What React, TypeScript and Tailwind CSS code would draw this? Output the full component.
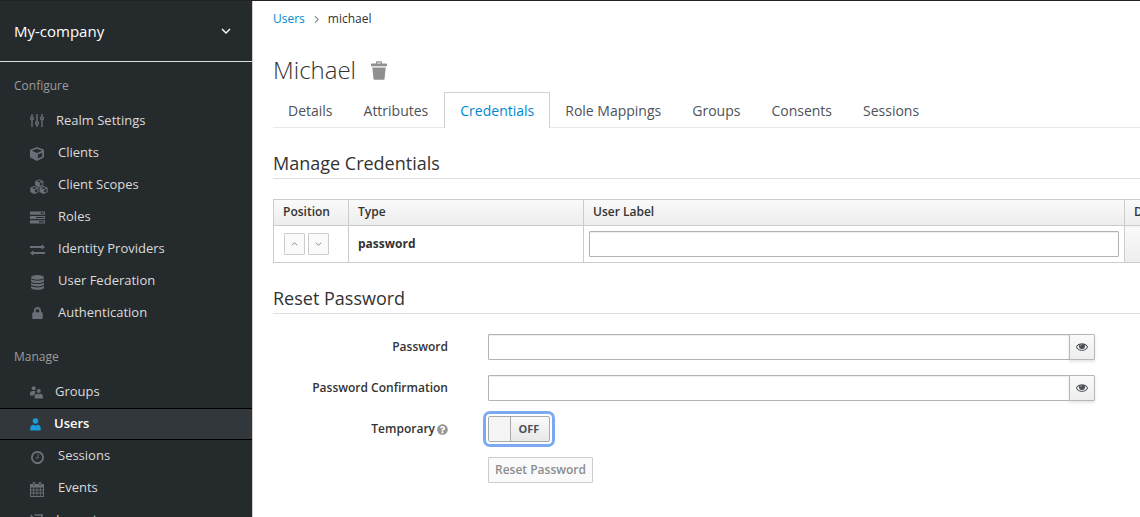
import { useState, type ReactNode } from "react";
import { FaCube, FaLock, FaQuestionCircle } from "react-icons/fa";

function SlidersIcon() {
  return (
    <svg viewBox="0 0 14 14" className="size-[14px]" fill="none" stroke="currentColor" strokeWidth="1.4" aria-hidden="true">
      <path d="M2 0V2.5M2 6V13M7 0V7.500M7 11V13M12 0V2.500M12 6V13" />
      <circle cx="2" cy="4.300" r="1.400" />
      <circle cx="7" cy="9.200" r="1.400" />
      <circle cx="12" cy="4.300" r="1.400" />
    </svg>
  );
}

const smallCubes = [
  { x: 5.5, y: 0.3 },
  { x: 0.5, y: 7.1 },
  { x: 10, y: 7.1 },
];

function CubesIcon() {
  return (
    <svg viewBox="0 0 18.500 15.500" className="h-[15px] w-[18px]" aria-hidden="true">
      {smallCubes.map((cube) => (
        <g key={cube.x} transform={`translate(${cube.x} ${cube.y})`}>
          <path fill="none" stroke="currentColor" strokeWidth="1.100" strokeLinejoin="round" d="M4 0.600L7.700 2.200V6L4 7.800L0.300 6V2.200zM0.300 2.200L4 3.900L7.700 2.200M4 3.900V7.800" />
          <path fill="currentColor" d="M0.300 2.200L4 3.900V7.800L0.300 6z" />
        </g>
      ))}
    </svg>
  );
}

function DatabaseIcon() {
  return (
    <svg viewBox="0 0 15 15" className="size-[15px]" fill="currentColor" aria-hidden="true">
      <ellipse cx="7.500" cy="2.400" rx="6.500" ry="2.400" />
      <path d="M1 4c1.300 1.100 3.700 1.700 6.500 1.700S12.700 5.100 14 4v1.700c0 1.300-2.900 2.400-6.500 2.400S1 7 1 5.700zM1 7.400c1.300 1.100 3.700 1.700 6.500 1.700s5.200-.6 6.500-1.700v1.700c0 1.300-2.900 2.400-6.500 2.400S1 10.400 1 9.100zM1 10.800c1.300 1.100 3.700 1.700 6.500 1.700s5.200-.6 6.500-1.700v1.700c0 1.300-2.900 2.400-6.500 2.400S1 13.800 1 12.500z" />
    </svg>
  );
}

function TasksIcon() {
  return (
    <svg viewBox="0 0 15 13" className="h-[13px] w-[15px]" fill="currentColor" aria-hidden="true">
      <path fillRule="evenodd" d="M0 0.5h15v3.2H0zM10.5 1.5v1.2h3.4V1.5zM0 4.9h15v3.2H0zM6 5.9v1.2h7.9V5.9zM0 9.3h15v3.2H0zM9 10.3v1.2h4.9v-1.2z" />
    </svg>
  );
}

function ExchangeIcon() {
  return (
    <svg viewBox="0 0 15 12" className="h-[12px] w-[15px]" fill="currentColor" aria-hidden="true">
      <path d="M0 2.1h11.600V0.300L15 3l-3.400 2.800V4.100H0zM15 8.100H3.400V6.200L0 9l3.400 2.800V10.100H15z" />
    </svg>
  );
}

function GroupsIcon() {
  return (
    <svg viewBox="0 0 13 13" className="size-[13px]" fill="currentColor" aria-hidden="true">
      <circle cx="3.7" cy="2.3" r="2" />
      <circle cx="8.8" cy="4.9" r="2" />
      <path d="M0 9.4V7.6C0 5.9 1.2 5 2.6 5h1.8c.7 0 1.300.2 1.700.6C5 6.400 4.900 7.300 5.300 8.100 4.600 8.400 4 8.900 3.700 9.400zM4.600 12.500v-1.900c0-1.700 1.300-2.900 2.800-2.900.8.6 2 .6 2.800 0 1.500 0 2.800 1.200 2.800 2.900v1.900z" />
    </svg>
  );
}

function UserIcon() {
  return (
    <svg viewBox="0 0 11 13" className="h-[13px] w-[11px]" fill="currentColor" aria-hidden="true">
      <circle cx="5.500" cy="3" r="2.800" />
      <path d="M0.300 12.500V10c0-2 1.300-3.300 3-3.300 1.300.9 3.100.9 4.400 0 1.700 0 3 1.300 3 3.300v2.500z" />
    </svg>
  );
}

function ClockIcon() {
  return (
    <svg viewBox="128 128 1536 1536" className="size-[13px]" fill="currentColor" aria-hidden="true">
      <path d="M1024 544v448q0 14-9 23t-23 9h-320q-14 0-23-9t-9-23v-64q0-14 9-23t23-9h224v-352q0-14 9-23t23-9h64q14 0 23 9t9 23zm416 352q0-148-73-273t-198-198-273-73-273 73-198 198-73 273 73 273 198 198 273 73 273-73 198-198 73-273zm224 0q0 209-103 385.500t-279.500 279.500-385.500 103-385.500-103-279.500-279.500-103-385.500 103-385.500 279.500-279.500 385.500-103 385.500 103 279.500 279.500 103 385.500z" />
    </svg>
  );
}

function CalendarIcon() {
  return (
    <svg viewBox="0 0 14 15" className="h-[15px] w-[14px]" aria-hidden="true">
      <path fill="currentColor" fillRule="evenodd" d="M1 2h1.600V1.200C2.600.5 3 0 3.700 0h.6c.7 0 1.100.5 1.100 1.200V2h3.200v-.8C8.600.5 9 0 9.700 0h.6c.7 0 1.100.5 1.100 1.200V2H13c.6 0 1 .4 1 1v11c0 .6-.4 1-1 1H1c-.6 0-1-.4-1-1V3c0-.6.4-1 1-1zM1 5.500v2h2.300v-2zM4.100 5.500v2h2.500v-2zM7.400 5.500v2h2.500v-2zM10.700 5.500v2H13v-2zM1 8.500v2h2.300v-2zM4.100 8.500v2h2.500v-2zM7.400 8.500v2h2.500v-2zM10.700 8.500v2H13v-2zM1 11.500V14h2.300v-2.500zM4.100 11.500V14h2.500v-2.500zM7.400 11.500V14h2.500v-2.500zM10.700 11.500V14H13v-2.500zM3.600 1v2.500h.8V1zM9.600 1v2.500h.8V1z" />
    </svg>
  );
}

function ImportIcon() {
  return (
    <svg viewBox="0 0 13 13" className="size-[13px]" fill="none" stroke="currentColor" strokeWidth="1.700" aria-hidden="true">
      <path d="M4.500 1H12v11H4.500M0.600 1.200L7.500 8M8 3.500V8.500H3" />
    </svg>
  );
}

function EyeIcon() {
  return (
    <svg viewBox="0 384 1792 1152" className="h-[8px] w-[12px]" fill="currentColor" aria-hidden="true">
      <path d="M1664 960q-152-236-381-353 61 104 61 225 0 185-131.500 316.500t-316.500 131.500-316.500-131.500-131.500-316.500q0-121 61-225-229 117-381 353 133 205 333.500 326.500t434.500 121.500 434.500-121.500 333.500-326.500zm-720-384q0-20-14-34t-34-14q-125 0-214.500 89.500t-89.500 214.500q0 20 14 34t34 14 34-14 14-34q0-86 61-147t147-61q20 0 34-14t14-34zm848 384q0 34-20 69-140 230-376.500 368.500t-499.500 138.500-499.500-139-376.500-368q-20-35-20-69t20-69q140-229 376.500-368t499.500-139 499.500 139 376.500 368q20 35 20 69z" />
      <circle cx="896" cy="832" r="330" fillOpacity="0.6" />
    </svg>
  );
}

function TrashIcon() {
  return (
    <svg viewBox="0 0 16 19" className="h-[19px] w-[16px]" fill="currentColor" aria-hidden="true">
      <path fillRule="evenodd" d="M0 3.200c0-.5.300-.8.800-.8H5V1.300C5 .6 5.500.2 6.100.2h3.800c.6 0 1.100.4 1.100 1.100v1.100h4.200c.5 0 .8.300.8.800v2H0zM6.300 1.500v.9h3.400v-.9zM1.300 6.400h13.400l-1.200 11.700c-.1.500-.4.700-.8.700H3.300c-.4 0-.7-.2-.8-.7z" />
    </svg>
  );
}

function Chevron({ className, d, width }: { className: string; d: string; width: string }) {
  return (
    <svg viewBox="0 0 10 6" className={className} fill="none" stroke="currentColor" strokeWidth={width} aria-hidden="true">
      <path d={d} />
    </svg>
  );
}

const DOWN = "M1 1L5 5L9 1";
const UP = "M1 5L5 1L9 5";

type Item = { label: string; icon: ReactNode; gap: string; active?: boolean };

const configure: Item[] = [
  { label: "Realm Settings", icon: <SlidersIcon />, gap: "w-[26px]" },
  { label: "Clients", icon: <FaCube className="size-[14px]" />, gap: "w-7 pt-[2px]" },
  { label: "Client Scopes", icon: <CubesIcon />, gap: "w-7 pt-[2px]" },
  { label: "Roles", icon: <TasksIcon />, gap: "w-7" },
  { label: "Identity Providers", icon: <ExchangeIcon />, gap: "w-7 pt-[2px]" },
  { label: "User Federation", icon: <DatabaseIcon />, gap: "w-7 pt-[2px]" },
  { label: "Authentication", icon: <FaLock className="h-[12px] w-[15px]" />, gap: "w-7" },
];

const manage: Item[] = [
  { label: "Groups", icon: <GroupsIcon />, gap: "w-[25px]" },
  { label: "Users", icon: <UserIcon />, gap: "w-6", active: true },
  { label: "Sessions", icon: <ClockIcon />, gap: "w-7 pl-px pt-[2px]" },
  { label: "Events", icon: <CalendarIcon />, gap: "w-7 pt-[2px]" },
  { label: "Import", icon: <ImportIcon />, gap: "w-[26px]" },
];

function NavSection({ title, items }: { title: string; items: Item[] }) {
  return (
    <section>
      <h2 className="px-[14px] text-xs leading-4 text-[#9c9c9c]">{title}</h2>
      <ul className="mt-[11px]">
        {items.map((item) => (
          <li key={item.label}>
            <a
              href={"#" + item.label.toLowerCase().replace(" ", "-")}
              className={
                item.active
                  ? "flex h-8 items-center border-y border-black bg-[#32373b] pl-[30px] text-[13px] font-semibold text-white"
                  : "flex h-8 items-center pl-[30px] text-[13px] text-[#dbdbdb]"
              }
            >
              <span className={(item.active ? "text-[#1b9cd8] " : "text-[#6a6e76] ") + "shrink-0 " + item.gap}>{item.icon}</span>
              {item.label}
            </a>
          </li>
        ))}
      </ul>
    </section>
  );
}

const tabs = ["Details", "Attributes", "Credentials", "Role Mappings", "Groups", "Consents", "Sessions"];

function SectionTitle({ children }: { children: ReactNode }) {
  return <h2 className="border-b border-[#ddd] pb-[3px] text-lg leading-6 text-[#333]">{children}</h2>;
}

const inputStyle = "h-[26px] w-full min-w-0 rounded-[1px] border border-[#b3b3b3] bg-white px-2 text-xs shadow-[inset_0_1px_1px_rgba(0,0,0,0.075)] outline-none";

function PasswordRow({ id, label }: { id: string; label: string }) {
  const [visible, setVisible] = useState(false);
  return (
    <div className="flex items-center">
      <label htmlFor={id} className="w-[175px] shrink-0 text-right text-xs font-semibold text-[#333]">
        {label}
      </label>
      <div className="ml-10 mr-[45px] flex flex-1">
        <input id={id} type={visible ? "text" : "password"} className={inputStyle} />
        <button
          type="button"
          aria-label={"Show " + label.toLowerCase()}
          onClick={() => setVisible(!visible)}
          className="-ml-px flex h-[26px] w-[26px] shrink-0 items-center justify-center rounded-r-[1px] border border-[#b7b7b7] bg-linear-to-b from-[#fafafa] to-[#ededed] text-[#4d5258] shadow-[0_2px_3px_rgba(3,3,3,0.1)]"
        >
          <EyeIcon />
        </button>
      </div>
    </div>
  );
}

const headCell = "border border-[#ccc] px-[9px] pb-px text-left font-semibold";
const moveButton = "flex h-[22px] w-[21px] items-center justify-center rounded-[1px] border border-[#ccc] bg-[#fafafa] text-[#8b8d8f]";

export default function App() {
  const [temporary, setTemporary] = useState(false);
  return (
    <div className="flex h-screen overflow-hidden border-t border-[#222] bg-white font-['Open_Sans',sans-serif] text-xs text-[#333]">
      <nav className="w-[253px] shrink-0 overflow-hidden border-r border-[#d1d1d1] bg-[#252a2d]">
        <button type="button" className="flex h-[61px] w-full items-center justify-between border-b border-[#d8dde0] pb-px pl-[14px] pr-[21px] text-[15px] text-white">
          My-company
          <Chevron className="h-[6px] w-[10px]" d={DOWN} width="1.4" />
        </button>
        <div className="flex flex-col gap-5 pt-4">
          <NavSection title="Configure" items={configure} />
          <NavSection title="Manage" items={manage} />
        </div>
      </nav>

      <main className="min-w-0 flex-1 overflow-hidden pl-5">
        <nav aria-label="Breadcrumb" className="flex h-9 items-center">
          <a href="#users" className="text-[#0088ce]">Users</a>
          <Chevron className="mx-[7px] h-[5px] w-[9px] -rotate-90 text-[#8b8d8f]" d={DOWN} width="1.4" />
          <span>michael</span>
        </nav>

        <div className="mt-[15px] flex h-9 items-center gap-[15px]">
          <h1 className="text-2xl font-light">Michael</h1>
          <button type="button" aria-label="Delete user" className="pt-px text-[#8f8f8f]">
            <TrashIcon />
          </button>
        </div>

        <ul className="mt-1 flex border-b border-[#e9e9e9] text-sm leading-[22px] text-[#4d5258]">
          {tabs.map((tab) => (
            <li key={tab} className="-mb-px">
              <a
                href={"#" + tab.toLowerCase().replace(" ", "-")}
                className={
                  tab === "Credentials"
                    ? "block border border-b-0 border-[#d1d1d1] bg-white px-[15px] pb-[6px] pt-[7px] text-[#0088ce]"
                    : "block border-r border-t border-transparent px-[15px] pb-[6px] pt-[7px]"
                }
              >
                {tab}
              </a>
            </li>
          ))}
        </ul>

        <div className="pt-[23px]">
          <SectionTitle>Manage Credentials</SectionTitle>
        </div>

        <table className="mt-5 w-[calc(100%+185px)] table-fixed border-collapse">
          <colgroup>
            <col className="w-[75px]" />
            <col className="w-[235px]" />
            <col />
            <col className="w-[200px]" />
          </colgroup>
          <thead>
            <tr className="h-[26px] bg-linear-to-b from-[#fafafa] to-[#ededed]">
              <th scope="col" className={headCell}>Position</th>
              <th scope="col" className={headCell}>Type</th>
              <th scope="col" className={headCell}>User Label</th>
              <th scope="col" className={headCell}>Data</th>
            </tr>
          </thead>
          <tbody>
            <tr className="h-[37px]">
              <td className="border border-[#ccc] px-[10px]">
                <div className="flex gap-[3px]">
                  <button type="button" aria-label="Move up" className={moveButton}>
                    <Chevron className="h-[4px] w-[7px]" d={UP} width="1.500" />
                  </button>
                  <button type="button" aria-label="Move down" className={moveButton}>
                    <Chevron className="h-[4px] w-[7px]" d={DOWN} width="1.500" />
                  </button>
                </div>
              </td>
              <td className="border border-[#ccc] px-[9px] font-bold">password</td>
              <td className="border border-[#ccc] px-[5px]">
                <input aria-label="User Label" type="text" className={inputStyle + " block"} />
              </td>
              <td className="border border-[#ccc] bg-linear-to-b from-[#fafafa] to-[#ededed]" />
            </tr>
          </tbody>
        </table>

        <div className="pt-[23px]">
          <SectionTitle>Reset Password</SectionTitle>
        </div>

        <form className="mt-5 flex flex-col gap-[15px]" onSubmit={(event) => event.preventDefault()}>
          <PasswordRow id="password" label="Password" />
          <PasswordRow id="password-confirmation" label="Password Confirmation" />
          <div className="flex items-center">
            <label htmlFor="temporary" className="flex w-[175px] shrink-0 items-center justify-end gap-[2px] font-semibold">
              Temporary
              <FaQuestionCircle className="size-[11px] text-[#999]" />
            </label>
            <label className="relative ml-10 flex h-[26px] w-[62px] cursor-pointer rounded-[2px] border border-[#aaa] bg-linear-to-b from-[#fafafa] to-[#e8e8e8] font-semibold text-[#4d5258] outline-3 outline-offset-2 outline-[#7baaf0]">
              <input
                id="temporary"
                type="checkbox"
                checked={temporary}
                onChange={(event) => setTemporary(event.target.checked)}
                className="peer absolute inset-0 size-full cursor-pointer opacity-0"
              />
              <span className="w-[22px] border-r border-[#aaa] bg-[#f5f5f5] peer-checked:order-last peer-checked:border-l peer-checked:border-r-0" />
              <span className="flex flex-1 items-center justify-center pr-[2px] text-[11px] font-bold">{temporary ? "ON" : "OFF"}</span>
            </label>
          </div>
          <div className="pl-[215px]">
            <button type="submit" disabled className="h-[26px] rounded-[1px] border border-[#ccc] bg-[#fafafa] px-[6px] font-semibold text-[#8b8d8f]">
              Reset Password
            </button>
          </div>
        </form>
      </main>
    </div>
  );
}
